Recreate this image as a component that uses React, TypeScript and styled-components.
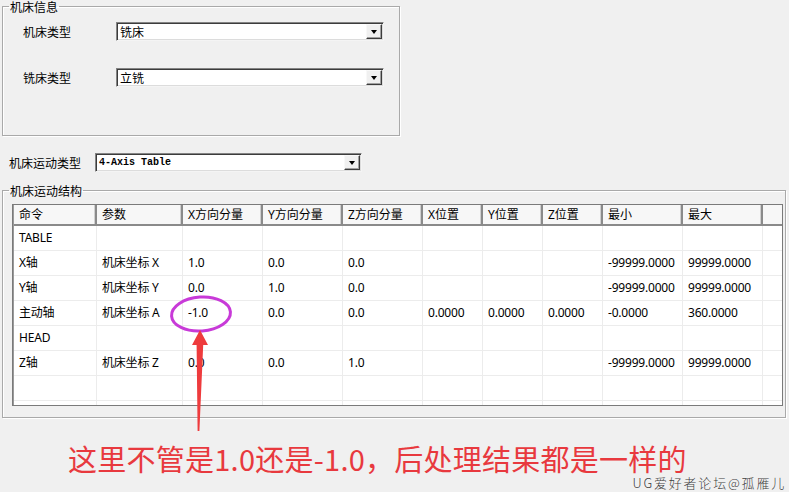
import React from 'react'
import styled, { createGlobalStyle } from 'styled-components'

const UI_FONT = `'Noto Sans CJK SC', 'Noto Sans', sans-serif`
const LIST_FONT = `'Noto Sans', 'Noto Sans CJK SC', sans-serif`

const GlobalStyle = createGlobalStyle`
  html, body {
    margin: 0;
    padding: 0;
    background: #f0f0f0;
  }
  * {
    box-sizing: border-box;
  }
`

/* column layout of the list view */
const COLUMNS = [
  { title: '命令', width: 83 },
  { title: '参数', width: 86 },
  { title: 'X方向分量', width: 80 },
  { title: 'Y方向分量', width: 80 },
  { title: 'Z方向分量', width: 80 },
  { title: 'X位置', width: 60 },
  { title: 'Y位置', width: 60 },
  { title: 'Z位置', width: 60 },
  { title: '最小', width: 80 },
  { title: '最大', width: 80 },
]
const GRID_COLS = COLUMNS.map((c) => `${c.width}px`).join(' ') + ' 1fr'

const ROWS: string[][] = [
  ['TABLE'],
  ['X轴', '机床坐标 X', '1.0', '0.0', '0.0', '', '', '', '-99999.0000', '99999.0000'],
  ['Y轴', '机床坐标 Y', '0.0', '1.0', '0.0', '', '', '', '-99999.0000', '99999.0000'],
  ['主动轴', '机床坐标 A', '-1.0', '0.0', '0.0', '0.0000', '0.0000', '0.0000', '-0.0000', '360.0000'],
  ['HEAD'],
  ['Z轴', '机床坐标 Z', '0.0', '0.0', '1.0', '', '', '', '-99999.0000', '99999.0000'],
  [],
  [],
]

const Page = styled.div`
  position: relative;
  width: 789px;
  height: 492px;
  overflow: hidden;
  background: #f0f0f0;
  font-family: ${UI_FONT};
  font-size: 12px;
  color: #000;
`

const GroupBox = styled.fieldset<{ $width: number; $height: number; $top: number }>`
  margin: ${(p) => p.$top}px 0 0 2px;
  padding: 0;
  min-width: 0;
  width: ${(p) => p.$width}px;
  height: ${(p) => p.$height}px;
  border: 1px solid #a9a9a9;
  box-shadow: 1px 1px 0 #fff, inset 1px 1px 0 #fff;
`

const Legend = styled.legend`
  margin-left: 6px;
  padding: 0 1px;
  font-size: 12px;
  line-height: 13px;
  color: #000;
`

const FieldGrid = styled.div`
  display: grid;
  grid-template-columns: 93px 268px;
  grid-auto-rows: 19px;
  row-gap: 27px;
  align-items: center;
  padding: 9px 0 0 20px;
`

const Label = styled.span`
  font-size: 12px;
  line-height: 14px;
  white-space: nowrap;
`

const MotionRow = styled.div`
  display: grid;
  grid-template-columns: 86px 267px;
  align-items: center;
  margin-top: 17px;
  padding-left: 9px;
`

const ComboBox = styled.div`
  height: 19px;
  display: flex;
  align-items: center;
  background: #fff;
  border: 1px solid;
  border-color: #848484 #f4f4f4 #f4f4f4 #848484;
  box-shadow: inset 1px 1px 0 #3c3c3c, inset -1px -1px 0 #dcdcdc;
  padding: 0 1px 0 3px;
`

const ComboText = styled.span<{ $mono?: boolean }>`
  flex: 1;
  font-family: ${(p) => (p.$mono ? `'Liberation Mono', 'DejaVu Sans Mono', monospace` : UI_FONT)};
  font-size: ${(p) => (p.$mono ? '10px' : '12px')};
  font-weight: ${(p) => (p.$mono ? 700 : 400)};
  line-height: 15px;
  white-space: nowrap;
`

const DropButton = styled.span`
  width: 16px;
  height: 15px;
  display: flex;
  align-items: center;
  justify-content: center;
  background: #f0f0f0;
  border: 1px solid;
  border-color: #f8f8f8 #3c3c3c #3c3c3c #f8f8f8;
  box-shadow: inset -1px -1px 0 #a0a0a0;

  &::after {
    content: '';
    width: 0;
    height: 0;
    border-left: 3.5px solid transparent;
    border-right: 3.5px solid transparent;
    border-top: 4px solid #000;
  }
`

const StructureBody = styled.div`
  padding: 7px 0 0 9px;
`

const ListView = styled.div`
  width: 771px;
  height: 202px;
  overflow: hidden;
  background: #fff;
  border: 1px solid #7a7a7a;
  box-shadow: inset 1px 1px 0 #9a9a9a;
  font-family: ${LIST_FONT};
  font-size: 12px;
`

const HeaderRow = styled.div`
  display: grid;
  grid-template-columns: ${GRID_COLS};
  height: 21px;
  margin-left: 1px;
  background: #f7f7f7;
  border-bottom: 2px solid #8a8a8a;
`

const HeaderCell = styled.div`
  padding-left: 5px;
  line-height: 19px;
  white-space: nowrap;
  border-right: 2px solid #8a8a8a;
  box-shadow: inset -1px 0 0 #d0d0d0;

  &:last-child {
    border-right: none;
    box-shadow: none;
  }
`

const Body = styled.div`
  margin-left: 1px;
`

const DataRow = styled.div`
  display: grid;
  grid-template-columns: ${GRID_COLS};
  height: 25px;
  border-bottom: 1px solid #ececec;
`

const DataCell = styled.div`
  padding-left: 5px;
  line-height: 24px;
  white-space: nowrap;
  letter-spacing: -0.2px;
  border-right: 1px solid #ececec;

  &:last-child {
    border-right: none;
  }
`

const Caption = styled.div`
  margin-top: 26px;
  padding-left: 68px;
  font-family: ${UI_FONT};
  font-size: 29px;
  line-height: 28px;
  letter-spacing: 0.25px;
  color: #e8393e;
  white-space: nowrap;
`

const Watermark = styled.div`
  position: absolute;
  right: 3px;
  bottom: 2px;
  font-family: ${UI_FONT};
  font-size: 13px;
  line-height: 15px;
  letter-spacing: 1.8px;
  font-weight: 300;
  color: #3c3c3c;
  text-shadow: 0 0 1px #fff;
`

const Markup = styled.svg`
  position: absolute;
  left: 0;
  top: 0;
  pointer-events: none;
`

const Combo: React.FC<{ value: string; mono?: boolean }> = ({ value, mono }) => (
  <ComboBox>
    <ComboText $mono={mono}>{value}</ComboText>
    <DropButton />
  </ComboBox>
)

export default function App() {
  return (
    <Page>
      <GlobalStyle />

      <GroupBox $width={398} $height={136} $top={0}>
        <Legend>机床信息</Legend>
        <FieldGrid>
          <Label>机床类型</Label>
          <Combo value="铣床" />
          <Label>铣床类型</Label>
          <Combo value="立铣" />
        </FieldGrid>
      </GroupBox>

      <MotionRow>
        <Label>机床运动类型</Label>
        <Combo value="4-Axis Table" mono />
      </MotionRow>

      <GroupBox $width={784} $height={234} $top={12}>
        <Legend>机床运动结构</Legend>
        <StructureBody>
          <ListView>
            <HeaderRow>
              {COLUMNS.map((c) => (
                <HeaderCell key={c.title}>{c.title}</HeaderCell>
              ))}
              <HeaderCell />
            </HeaderRow>
            <Body>
              {ROWS.map((row, i) => (
                <DataRow key={i}>
                  {COLUMNS.map((c, j) => (
                    <DataCell key={c.title}>{row[j] ?? ''}</DataCell>
                  ))}
                  <DataCell />
                </DataRow>
              ))}
            </Body>
          </ListView>
        </StructureBody>
      </GroupBox>

      <Caption>这里不管是1.0还是-1.0，后处理结果都是一样的</Caption>

      {/* hand-drawn markup over the screenshot */}
      <Markup width={789} height={492} viewBox="0 0 789 492">
        <ellipse
          cx={201}
          cy={314}
          rx={29.5}
          ry={17}
          transform="rotate(-4 201 314)"
          fill="none"
          stroke="#c83ad8"
          strokeWidth={3}
        />
        <path d="M200 330 L208 345 L203.2 345 L199.4 431 L197.6 431 L196.6 345 L192 345 Z" fill="#ee3b3d" />
      </Markup>

      <Watermark>UG爱好者论坛@孤雁儿</Watermark>
    </Page>
  )
}
